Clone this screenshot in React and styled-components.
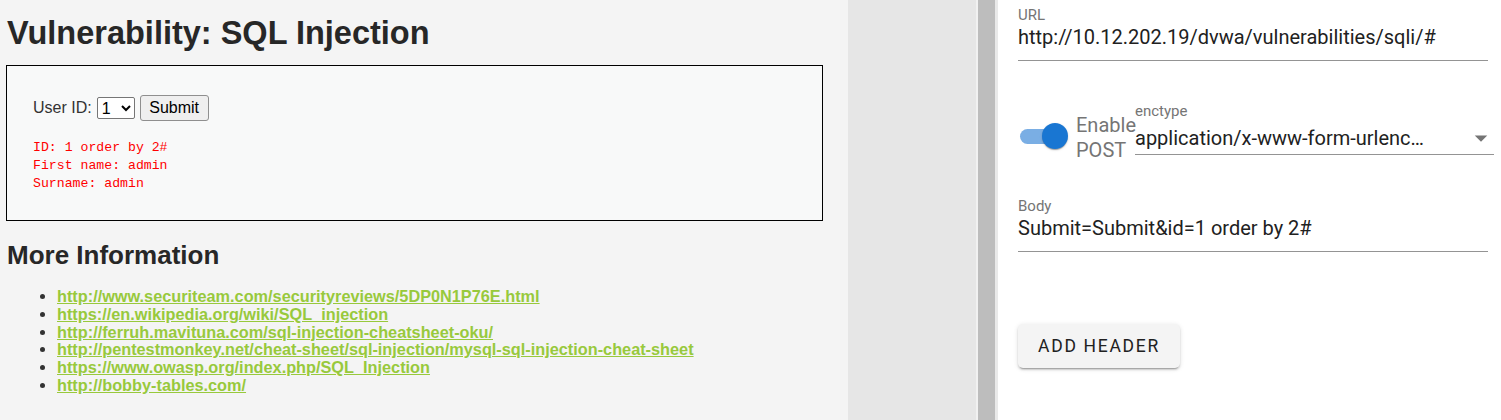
import React from "react";
import styled, { createGlobalStyle } from "styled-components";

const GlobalStyle = createGlobalStyle`
  html, body {
    margin: 0;
    padding: 0;
    background: #ffffff;
  }
  * {
    box-sizing: border-box;
  }
`;

const Screen = styled.div`
  display: flex;
  width: 1501px;
  height: 420px;
  overflow: hidden;
`;

const DvwaPage = styled.div`
  width: 848px;
  height: 100%;
  padding: 0 6px;
  background: #f4f4f4;
  font-family: "Liberation Sans", Arial, sans-serif;
  color: #272727;
`;

const Title = styled.h1`
  margin: 15px 0 13px 1px;
  font-size: 32.5px;
  font-weight: bold;
  line-height: 37px;
`;

const CodeArea = styled.div`
  width: 817px;
  border: 1px solid #000;
  background: #f8f9f9;
  padding: 29px 26px 27px;
`;

const FormRow = styled.form`
  display: flex;
  align-items: center;
  height: 26px;
  font-size: 16px;
  color: #333;
`;

const IdSelect = styled.select`
  width: 38px;
  height: 22px;
  margin: 0 5px 0 5px;
  font-size: 16px;
  font-family: "Liberation Sans", Arial, sans-serif;
  border: 1px solid #767676;
  border-radius: 2px;
  background: #fff;
  color: #000;
`;

const SubmitButton = styled.button`
  width: 69px;
  height: 26px;
  padding: 0;
  font-size: 16px;
  font-family: "Liberation Sans", Arial, sans-serif;
  background: #efefef;
  border: 1px solid #8f8f8f;
  border-radius: 3px;
  color: #000;
`;

const Result = styled.pre`
  margin: 18px 0 0;
  font-family: "Liberation Mono", "Courier New", monospace;
  font-size: 13.2px;
  line-height: 18px;
  color: #ff0000;
`;

const SubTitle = styled.h2`
  margin: 19px 0 18px 1px;
  font-size: 26px;
  font-weight: bold;
  line-height: 30px;
`;

const LinkList = styled.ul`
  margin: 0;
  padding-left: 51px;
  color: #333;
`;

const LinkItem = styled.li`
  font-size: 16.3px;
  line-height: 17.8px;
`;

const Link = styled.a`
  color: #98c93c;
  font-weight: bold;
  text-decoration: underline;
`;

const Gutter = styled.div`
  width: 128px;
  height: 100%;
  background: #e6e6e6;
`;

const Splitter = styled.div`
  width: 22px;
  height: 100%;
  background: #bdbdbd;
  border-left: 2px solid #f1f1f1;
  border-right: 3px solid #e9e9e9;
`;

const Panel = styled.div`
  flex: 1;
  height: 100%;
  padding: 6px 13px 0 20px;
  background: #fff;
  font-family: Roboto, "Noto Sans", sans-serif;
`;

const Field = styled.div`
  display: flex;
  flex-direction: column;
  margin-top: ${(p) => p.top || 0}px;
  margin-right: ${(p) => p.extend || 0}px;
  flex: ${(p) => (p.grow ? 1 : "none")};
`;

const FieldLabel = styled.label`
  font-size: 15px;
  line-height: 18px;
  color: #757575;
`;

const FieldValue = styled.div`
  display: flex;
  align-items: center;
  justify-content: space-between;
  margin-top: ${(p) => p.gap || 1}px;
  padding-bottom: ${(p) => p.pad || 11}px;
  border-bottom: 1px solid #949494;
  font-size: 20px;
  line-height: 24px;
  color: #212121;
  white-space: nowrap;
`;

const PostRow = styled.div`
  display: flex;
  align-items: flex-start;
  margin-top: 41px;
`;

const Switch = styled.div`
  position: relative;
  width: 48px;
  height: 26px;
  margin: 21px 0 0 2px;
`;

const Track = styled.div`
  position: absolute;
  left: 0;
  top: 6px;
  width: 42px;
  height: 15px;
  border-radius: 8px;
  background: #7aaee4;
`;

const Thumb = styled.div`
  position: absolute;
  right: 0;
  top: 0;
  width: 26px;
  height: 26px;
  border-radius: 50%;
  background: #1976d2;
  box-shadow: 0 2px 1px -1px rgba(0, 0, 0, 0.2), 0 1px 1px 0 rgba(0, 0, 0, 0.14),
    0 1px 3px 0 rgba(0, 0, 0, 0.12);
`;

const SwitchLabel = styled.div`
  margin: 11px 0 0 8px;
  width: 59px;
  font-size: 20px;
  line-height: 25px;
  color: #757575;
`;

const ArrowIcon = styled.svg`
  width: 30px;
  height: 30px;
  margin: -3px -2px -3px 0;
  fill: #757575;
`;

const HeaderButton = styled.button`
  display: block;
  margin-top: 72px;
  width: 162px;
  height: 44px;
  padding: 0;
  border: none;
  border-radius: 5px;
  background: #f4f4f4;
  font-family: Roboto, "Noto Sans", sans-serif;
  font-size: 17.5px;
  font-weight: 400;
  letter-spacing: 1.7px;
  color: #212121;
  box-shadow: 0 3px 1px -2px rgba(0, 0, 0, 0.2), 0 2px 2px 0 rgba(0, 0, 0, 0.14),
    0 1px 5px 0 rgba(0, 0, 0, 0.12);
`;

const links = [
  "http://www.securiteam.com/securityreviews/5DP0N1P76E.html",
  "https://en.wikipedia.org/wiki/SQL_injection",
  "http://ferruh.mavituna.com/sql-injection-cheatsheet-oku/",
  "http://pentestmonkey.net/cheat-sheet/sql-injection/mysql-sql-injection-cheat-sheet",
  "https://www.owasp.org/index.php/SQL_Injection",
  "http://bobby-tables.com/",
];

export default function App() {
  return (
    <>
      <GlobalStyle />
      <Screen>
        <DvwaPage>
          <Title>Vulnerability: SQL Injection</Title>
          <CodeArea>
            <FormRow onSubmit={(e) => e.preventDefault()}>
              User ID:
              <IdSelect defaultValue="1">
                <option value="1">1</option>
              </IdSelect>
              <SubmitButton type="submit">Submit</SubmitButton>
            </FormRow>
            <Result>
              {"ID: 1 order by 2#\nFirst name: admin\nSurname: admin"}
            </Result>
          </CodeArea>
          <SubTitle>More Information</SubTitle>
          <LinkList>
            {links.map((l) => (
              <LinkItem key={l}>
                <Link href="#">{l}</Link>
              </LinkItem>
            ))}
          </LinkList>
        </DvwaPage>
        <Gutter />
        <Splitter />
        <Panel>
          <Field>
            <FieldLabel>URL</FieldLabel>
            <FieldValue>http://10.12.202.19/dvwa/vulnerabilities/sqli/#</FieldValue>
          </Field>
          <PostRow>
            <Switch>
              <Track />
              <Thumb />
            </Switch>
            <SwitchLabel>
              Enable
              <br />
              POST
            </SwitchLabel>
            <Field grow extend={-6}>
              <FieldLabel>enctype</FieldLabel>
              <FieldValue gap={6} pad={4}>
                <span>application/x-www-form-urlenc…</span>
                <ArrowIcon viewBox="0 0 24 24">
                  <path d="M7 10l5 5 5-5z" />
                </ArrowIcon>
              </FieldValue>
            </Field>
          </PostRow>
          <Field top={34}>
            <FieldLabel>Body</FieldLabel>
            <FieldValue>Submit=Submit&amp;id=1 order by 2#</FieldValue>
          </Field>
          <HeaderButton>ADD HEADER</HeaderButton>
        </Panel>
      </Screen>
    </>
  );
}
